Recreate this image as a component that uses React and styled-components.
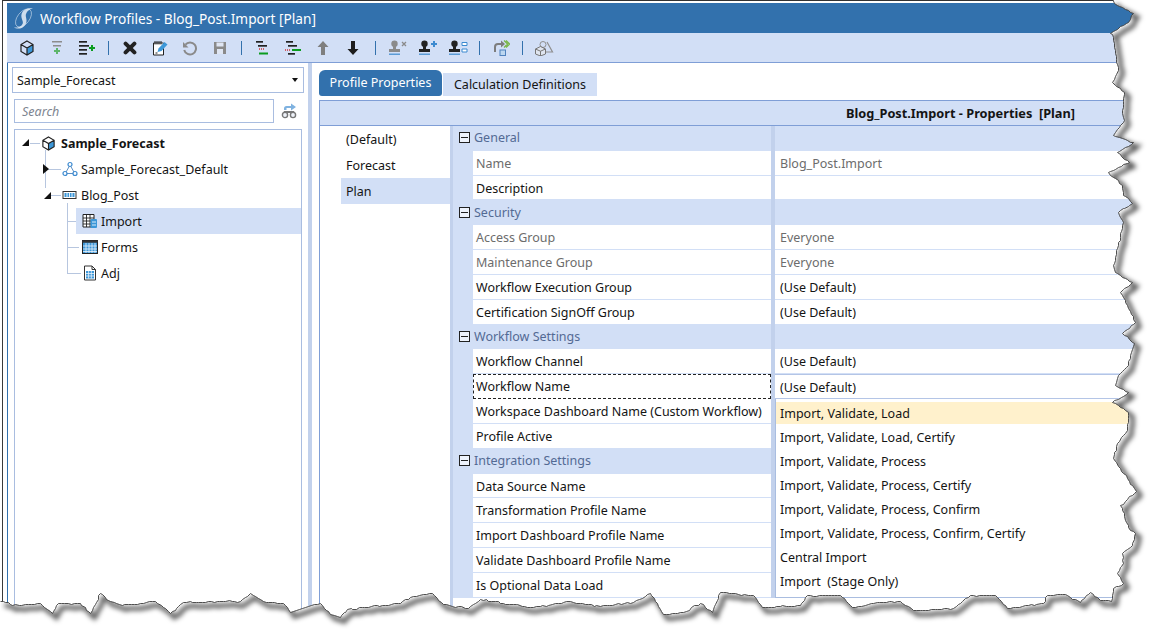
import React from 'react';
import styled, { createGlobalStyle } from 'styled-components';

const FONT = '"Noto Sans", "Open Sans", sans-serif';
const BLUE = '#3271ad';
const PALE = '#d2dff6';
const BAND = '#c2d1ec';
const EDGE = '#a9bde0';

const Global = createGlobalStyle`
  html, body { margin: 0; padding: 0; background: #fff; }
  body { font-family: ${FONT}; font-size: 12.5px; color: #141414; }
`;

const Page = styled.div`
  position: relative;
  width: 1156px;
  height: 638px;
  overflow: hidden;
  background: #fff;
  padding-left: 2px;
  box-sizing: border-box;
`;
const Frame = styled.div`
  height: 638px;
  border-left: 1px solid #3a3a3a;
  border-top: 1px solid #333;
  padding: 2px 0 0 4px;
  box-sizing: border-box;
  display: flex;
  flex-direction: column;
`;
const TitleBar = styled.div`
  height: 30px;
  flex: none;
  background: ${BLUE};
  display: flex;
  align-items: center;
  gap: 6px;
  padding-left: 6px;
  color: #fff;
  font-size: 13.7px;
`;
const Toolbar = styled.div`
  height: 29px;
  flex: none;
  background: ${PALE};
  border-bottom: 1px solid #7f9ed6;
  display: flex;
  align-items: center;
  padding-left: 5px;
`;
const ToolBtn = styled.div`
  width: 30px;
  height: 20px;
  display: flex;
  align-items: center;
  justify-content: center;
  flex: none;
`;
const ToolSep = styled.div`
  width: 1px;
  height: 14px;
  background: #3271ad;
  flex: none;
  margin: 0 ${p => p.$m || 6}px;
`;
const Body = styled.div`
  flex: 1;
  display: flex;
  min-height: 0;
  border-left: 1px solid ${BLUE};
`;
const LeftPanel = styled.div`
  width: 300px;
  flex: none;
  padding: 4px 0 0 4px;
  box-sizing: border-box;
  display: flex;
  flex-direction: column;
`;
const Select = styled.div`
  width: 292px;
  height: 26px;
  border: 1px solid ${EDGE};
  box-sizing: border-box;
  display: flex;
  align-items: center;
  justify-content: space-between;
  padding: 0 4px;
`;
const Caret = styled.span`
  width: 0;
  height: 0;
  border-left: 3px solid transparent;
  border-right: 3px solid transparent;
  border-top: 4px solid #111;
  margin-right: 1px;
`;
const SearchRow = styled.div`
  display: flex;
  align-items: center;
  margin: 6px 0 6px 2px;
  gap: 7px;
`;
const Search = styled.div`
  width: 260px;
  height: 24px;
  border: 1px solid ${EDGE};
  box-sizing: border-box;
  color: #7d8590;
  font-style: italic;
  display: flex;
  align-items: center;
  padding-left: 7px;
`;
const Tree = styled.div`
  margin-left: 2px;
  width: 288px;
  flex: 1;
  border: 1px solid ${EDGE};
  border-bottom: 0;
  box-sizing: border-box;
`;
const TreeRow = styled.div`
  position: relative;
  height: 26px;
  display: flex;
  align-items: center;
  gap: ${p => p.$gap ?? 4}px;
  font-weight: ${p => (p.$bold ? 700 : 400)};
  padding-left: ${p => p.$pad}px;
  margin-left: ${p => (p.$sel ? 61 : 0)}px;
  background: ${p => (p.$sel ? PALE : 'transparent')};
`;
const Arrow = styled.span`
  position: absolute;
  left: ${p => p.$x}px;
  top: ${p => p.$y}px;
  width: 0;
  height: 0;
  ${p => p.$open
    ? `border-bottom: 7px solid #111; border-left: 7px solid transparent;`
    : `border-left: 6px solid #111; border-top: 5px solid transparent; border-bottom: 5px solid transparent;`}
`;
const VLine = styled.span`
  position: absolute;
  left: ${p => p.$x}px;
  top: ${p => p.$top}px;
  height: ${p => p.$h}px;
  width: 1px;
  background: #b7c6df;
`;
const HLine = styled.span`
  position: absolute;
  left: ${p => p.$x}px;
  top: 13px;
  width: ${p => p.$w}px;
  height: 1px;
  background: #b7c6df;
`;
const Splitter = styled.div`
  width: 4px;
  flex: none;
  background: ${BAND};
`;
const RightPanel = styled.div`
  flex: 1;
  min-width: 0;
  padding: 7px 0 0 7px;
  display: flex;
  flex-direction: column;
`;
const Tabs = styled.div`
  height: 26px;
  flex: none;
  display: flex;
  align-items: center;
  gap: 1px;
  margin-bottom: 4px;
`;
const ActiveTab = styled.div`
  width: 123px;
  height: 26px;
  background: ${BLUE};
  color: #fff;
  border-radius: 6px 6px 3px 3px;
  display: flex;
  align-items: center;
  justify-content: center;
  padding-bottom: 2px;
  box-sizing: border-box;
`;
const Tab = styled.div`
  width: 154px;
  height: 23px;
  margin-top: 2px;
  background: ${PALE};
  display: flex;
  align-items: center;
  justify-content: center;
`;
const Box = styled.div`
  flex: 1;
  min-height: 0;
  border-top: 1px solid #7f9ed6;
  border-left: 1px solid #7f9ed6;
  display: flex;
  flex-direction: column;
`;
const BoxHead = styled.div`
  height: 24px;
  flex: none;
  background: ${PALE};
  border-bottom: 1px solid #7f9ed6;
  display: flex;
  align-items: center;
  justify-content: flex-end;
  padding-right: 81px;
  font-weight: 700;
  font-size: 12.75px;
  white-space: pre;
`;
const BoxBody = styled.div`
  flex: 1;
  min-height: 0;
  display: flex;
`;
const ProfileList = styled.div`
  width: 109px;
  flex: none;
  padding-left: 21px;
  border-right: 3px solid ${BAND};
`;
const ProfileItem = styled.div`
  height: 26px;
  display: flex;
  align-items: center;
  padding-left: 5px;
  background: ${p => (p.$sel ? PALE : 'transparent')};
`;
const Grid = styled.div`
  position: relative;
  flex: 1;
  min-width: 0;
  display: grid;
  grid-auto-rows: 24.84px;
  align-content: start;
`;
const Row = styled.div`
  display: grid;
  grid-template-columns: 20px 298px 4px 1fr;
  background: ${PALE};
  min-width: 0;
`;
const GroupCell = styled.div`
  grid-column: 1 / 3;
  display: flex;
  align-items: center;
  color: #536a94;
  padding: 0 0 1px 6px;
  gap: 4px;
`;
const Minus = styled.span`
  width: 9px;
  height: 9px;
  border: 1px solid #222;
  position: relative;
  background: #eef3fc;
  flex: none;
  &::after {
    content: '';
    position: absolute;
    left: 1px;
    right: 1px;
    top: 4px;
    height: 1px;
    background: #222;
  }
`;
const Gutter = styled.div``;
const NameCell = styled.div`
  background: #fff;
  border-bottom: 1px solid ${PALE};
  box-sizing: border-box;
  display: flex;
  align-items: center;
  padding: 1px 0 0 3px;
  color: ${p => (p.$dim ? '#6c6c6c' : '#141414')};
  white-space: nowrap;
  ${p => p.$focus && `outline: 1px dashed #222; outline-offset: -1px; border-bottom-color: transparent;`}
`;
const Divider = styled.div`
  background: ${BAND};
`;
const ValueCell = styled.div`
  background: ${p => (p.$group ? PALE : '#fff')};
  ${p => !p.$group && `border-bottom: 1px solid ${p.$edit ? '#b4c5e6' : PALE};`}
  ${p => p.$edit && `border-top: 1px solid #b4c5e6;`}
  box-sizing: border-box;
  display: flex;
  align-items: center;
  padding: 1px 0 0 5px;
  color: ${p => (p.$dim ? '#6c6c6c' : '#141414')};
`;
const Menu = styled.div`
  position: absolute;
  left: 322px;
  right: 0;
  top: 273px;
  height: 199px;
  background: #fff;
  border-left: 1px solid ${EDGE};
  border-bottom: 1px solid ${EDGE};
  box-sizing: border-box;
  padding-top: 3px;
`;
const MenuItem = styled.div`
  box-sizing: border-box;
  display: flex;
  align-items: center;
  padding-left: 4px;
  white-space: pre;
  background: ${p => (p.$hot ? '#fff1cc' : 'transparent')};
  height: ${p => (p.$hot ? 22 : 24)}px;
  margin-bottom: ${p => (p.$hot ? 1 : 0)}px;
`;
const TornLayer = styled.svg`
  position: absolute;
  left: 0;
  top: 0;
  pointer-events: none;
`;

/* ---------- icons ---------- */
const Cube = ({ s = 16 }) => (
  <svg width={s} height={s} viewBox="0 0 16 16">
    <path d="M8 8 14 5V11.5L8 15Z" fill="#3c97d8" />
    <path d="M8 1 14 4.5V11.5L8 15 2 11.5V4.5ZM2 4.5 8 8 14 4.5M8 8V15" fill="none" stroke="#222" strokeWidth="1.2" />
  </svg>
);
const AddAbove = () => (
  <svg width="16" height="16" viewBox="0 0 16 16">
    <rect x="3" y="1" width="10" height="1.5" fill="#8c8c8c" />
    <rect x="4" y="5" width="8" height="1.5" fill="#8c8c8c" />
    <path d="M8 8v6M5 11h6" stroke="#5db56a" strokeWidth="2" />
  </svg>
);
const AddList = () => (
  <svg width="18" height="16" viewBox="0 0 18 16">
    <rect x="1" y="1" width="8" height="1.7" fill="#222" />
    <rect x="1" y="5" width="10" height="1.7" fill="#222" />
    <rect x="1" y="9" width="8" height="1.7" fill="#222" />
    <rect x="1" y="13" width="8" height="1.7" fill="#222" />
    <path d="M14 5v6M11 8h6" stroke="#0a9c1f" strokeWidth="2" />
  </svg>
);
const Cross = () => (
  <svg width="14" height="14" viewBox="0 0 14 14">
    <path d="M2.6 2.6 11.4 11.4M11.4 2.6 2.6 11.4" stroke="#222" strokeWidth="4" strokeLinecap="round" />
  </svg>
);
const Note = () => (
  <svg width="16" height="16" viewBox="0 0 16 16">
    <path d="M1.5 3h10v12h-10Z" fill="#fff" stroke="#222" />
    <path d="M3 1v3.5M5 1v3.5M7 1v3.5M9 1v3.5" stroke="#222" />
    <path d="M5.5 12l1-3.5L12.5 2l3 2.5-6 6.5Z" fill="#3c97d8" />
    <path d="M3.5 13h2" stroke="#222" />
  </svg>
);
const Undo = () => (
  <svg width="16" height="16" viewBox="0 0 16 16">
    <path d="M3.4 4.6A6 6 0 1 1 2.2 10" fill="none" stroke="#8a8a8a" strokeWidth="2" />
    <path d="M1 2v5.5h5.5Z" fill="#8a8a8a" />
  </svg>
);
const Save = () => (
  <svg width="14" height="14" viewBox="0 0 14 14">
    <path d="M1 1H13V13H1Z" fill="#8a8a8a" />
    <rect x="3.5" y="1.5" width="7" height="4" fill="#dfe6f3" />
    <rect x="4" y="8" width="6" height="5" fill="#dfe6f3" />
  </svg>
);
const Outdent = ({ mode }) => (
  <svg width="18" height="16" viewBox="0 0 18 16">
    <rect x="2" y="1" width="7" height="1.7" fill="#222" />
    <rect x="4" y="5" width="9" height="1.7" fill="#222" />
    {mode === 'a' ? (
      <>
        <path d="M5 9h6" stroke="#d03030" strokeWidth="1.4" strokeDasharray="1 1" />
        <rect x="5" y="12.5" width="9" height="2" fill="#0a9c1f" />
      </>
    ) : (
      <>
        <path d="M1 10h6" stroke="#d03030" strokeWidth="1.4" strokeDasharray="1 1" />
        <rect x="8" y="9" width="9" height="2" fill="#0a9c1f" />
        <rect x="4" y="13" width="7" height="1.7" fill="#222" />
      </>
    )}
  </svg>
);
const ArrowUp = ({ c = '#7f7f7f' }) => (
  <svg width="14" height="16" viewBox="0 0 14 16">
    <path d="M7 1 12.5 7H9V15H5V7H1.5Z" fill={c} />
  </svg>
);
const ArrowDown = () => (
  <svg width="14" height="16" viewBox="0 0 14 16">
    <path d="M7 15 12.5 9H9V1H5V9H1.5Z" fill="#1d1d1d" />
  </svg>
);
const Stamp = ({ c, children }) => (
  <svg width="20" height="16" viewBox="0 0 20 16">
    <circle cx="6.5" cy="3.8" r="3.2" fill={c} />
    <path d="M5 5.5h3V9h4v3H1V9h4Z" fill={c} />
    <rect x="1" y="13.5" width="11" height="1.5" fill="#5b9bd5" />
    {children}
  </svg>
);
const Share = () => (
  <svg width="18" height="18" viewBox="0 0 18 18">
    <path d="M3 13V8a3 3 0 0 1 3-3h4" fill="none" stroke="#7d7d7d" strokeWidth="2" />
    <path d="M9 1.5 13 5 9 8.5Z" fill="#7d7d7d" />
    <path d="M12 1.5l3.5 3.5-3.5 3.5M14 1.5l3.5 3.5-3.5 3.5" fill="none" stroke="#7ab648" strokeWidth="1.3" />
    <rect x="8" y="11" width="5.5" height="5.5" fill="#bcd6ef" stroke="#4f81bd" />
  </svg>
);
const Shapes = () => (
  <svg width="20" height="16" viewBox="0 0 20 16">
    <path d="M13 2 18.5 12H11" fill="none" stroke="#8f8f8f" strokeWidth="1.2" />
    <circle cx="9" cy="4.5" r="3" fill="none" stroke="#8f8f8f" />
    <path d="M6.5 6.5 11.5 9v5l-5 2-5-2V9Z" fill="#dfe5f0" stroke="#777" />
    <path d="M1.5 9l5 2.2 5-2.2M6.5 11.2V16" fill="none" stroke="#777" />
  </svg>
);
const Bike = () => (
  <svg width="16" height="16" viewBox="0 0 16 16">
    <path d="M3 7V5.5A2.5 2.5 0 0 1 5.5 3H10V0.5L15 4 10 7.5V5H5.5v2Z" fill="#7fb2e0" />
    <circle cx="4" cy="12" r="2.6" fill="#eef2f9" stroke="#777" strokeWidth="1.4" />
    <circle cx="12" cy="12" r="2.6" fill="#eef2f9" stroke="#777" strokeWidth="1.4" />
    <path d="M3 8h10l1 2H2Z" fill="#777" />
  </svg>
);
const Logo = () => (
  <svg width="21" height="22" viewBox="0 0 21 22">
    <ellipse cx="10.5" cy="11" rx="6" ry="10.5" fill="none" stroke="#c4d6e9" strokeWidth=".9" opacity=".7" transform="rotate(38 10.5 11)" />
    <path d="M20 1.5C14 .5 9.5 3 8.5 7.5S11 14 9.5 17 4 21 1 20.5c3 2 9 1.5 11.5-3s-.5-7 .5-10.5S17 2 20 1.5Z" fill="#dfe9f4" opacity=".9" />
  </svg>
);
const Network = () => (
  <svg width="16" height="16" viewBox="0 0 16 16">
    <path d="M8 4 3.5 12M8 4l4.5 8M3.5 12.5h9" stroke="#5c8fc4" fill="none" />
    <circle cx="8" cy="3.5" r="2" fill="#fff" stroke="#3c8ad0" strokeWidth="1.2" />
    <circle cx="3" cy="12.5" r="2" fill="#fff" stroke="#3c8ad0" strokeWidth="1.2" />
    <circle cx="13" cy="12.5" r="2" fill="#fff" stroke="#3c8ad0" strokeWidth="1.2" />
  </svg>
);
const Rack = () => (
  <svg width="15" height="16" viewBox="0 0 15 16">
    <rect x="1" y="4.5" width="13" height="7" fill="#fff" stroke="#333" />
    <rect x="2.5" y="6" width="10" height="4" fill="#3c97d8" />
    <path d="M5 6v4M7.5 6v4M10 6v4" stroke="#eaf3fb" />
  </svg>
);
const ImportIco = () => (
  <svg width="16" height="16" viewBox="0 0 16 16">
    <path d="M1 1.5H12V14H1Z" fill="#fff" stroke="#222" />
    <path d="M1 5h11M1 8h11M1 11h11M4.5 1.5V14M8 1.5V14" stroke="#222" strokeWidth=".9" />
    <rect x="8.5" y="6" width="6.5" height="9" rx="1" fill="#3c97d8" />
    <path d="M10 9h4M10 12h4" stroke="#d8ebf9" />
  </svg>
);
const FormsIco = () => (
  <svg width="16" height="16" viewBox="0 0 16 16">
    <rect x=".5" y="1.5" width="15" height="13" fill="#3c97d8" stroke="#222" />
    <rect x=".5" y="1.5" width="15" height="2.2" fill="#333" />
    <path d="M4 4v10M7 4v10M10 4v10M13 4v10M1 7h14M1 10h14M1 12.5h14" stroke="#eaf3fb" strokeWidth=".8" />
  </svg>
);
const AdjIco = () => (
  <svg width="14" height="16" viewBox="0 0 14 16">
    <path d="M1.5 1H9l3.5 3.5V15h-11Z" fill="#fff" stroke="#333" />
    <path d="M9 1v3.5h3.5" fill="none" stroke="#333" />
    <rect x="3" y="6" width="8" height="7.5" fill="#3c97d8" />
    <path d="M5.6 6v7.5M8.3 6v7.5M3 8.5h8M3 11h8" stroke="#eaf3fb" strokeWidth=".8" />
  </svg>
);

/* ---------- torn paper edge ---------- */
const EDGE_POINTS = [
  [1113,0],[1114,3],[1133,13],[1128,22],[1110,33],[1113,37],[1115,50],[1118,70],[1112,82],[1124,92],[1122,110],[1124,120],
  [1113,135],[1133,142],[1117,152],[1129,162],[1108,172],[1122,185],[1123,195],[1132,203],[1118,212],[1123,222],[1118,245],
  [1113,265],[1115,272],[1132,282],[1120,292],[1127,305],[1135,322],[1122,333],[1134,343],[1130,355],[1128,365],[1118,375],
  [1115,385],[1128,392],[1112,402],[1128,412],[1127,430],[1117,443],[1113,458],[1127,478],[1136,491],[1120,505],[1130,530],
  [1135,533],[1132,545],[1122,553],[1123,563],[1117,573],[1123,583],[1113,588],[1111,601],[1100,600],[1090,592],[1080,602],
  [1065,594],[1047,595],[1043,603],[1007,608],[995,595],[970,595],[953,608],[913,610],[900,601],[877,602],[852,607],[840,595],
  [807,595],[800,605],[762,607],[753,595],[720,592],[712,612],[700,603],[683,612],[663,614],[650,593],[633,602],[600,606],
  [570,601],[533,607],[503,603],[480,599],[468,608],[443,604],[432,593],[410,597],[400,603],[347,609],[340,617],[330,614],
  [320,603],[290,612],[283,603],[263,601],[250,593],[240,601],[217,601],[183,602],[170,613],[155,601],[122,605],[108,600],
  [100,593],[90,613],[80,603],[58,603],[52,613],[40,603],[12,605],[8,602],[0,601]
];

const buildEdge = () => {
  let seed = 17;
  const rnd = () => { seed = (seed * 137 + 71) % 1009; return seed / 1009 - 0.5; };
  let d = '';
  EDGE_POINTS.forEach(([x, y], i) => {
    if (i === 0) { d = `M${x} ${y}`; return; }
    const [px, py] = EDGE_POINTS[i - 1];
    const n = Math.max(1, Math.round(Math.hypot(x - px, y - py) / 3));
    for (let k = 1; k <= n; k++) {
      const t = k / n;
      const j = k === n ? 0 : 1.3;
      d += `L${Math.round(px + (x - px) * t + rnd() * j) + 0.5} ${Math.round(py + (y - py) * t + rnd() * j) + 0.5}`;
    }
  });
  return d;
};

const TornEdge = () => {
  const line = buildEdge();
  const outside = `${line}L0 638L1156 638L1156 0Z`;
  return (
    <TornLayer width="1156" height="638" viewBox="0 0 1156 638">
      <defs>
        <filter id="blur" x="-5%" y="-5%" width="110%" height="110%">
          <feGaussianBlur stdDeviation="2.4" />
        </filter>
        <clipPath id="out"><path d={outside} /></clipPath>
      </defs>
      <path d={outside} fill="#fff" />
      <g clipPath="url(#out)">
        <path d={line} fill="none" stroke="#000" strokeOpacity=".7" strokeWidth="4" filter="url(#blur)" transform="translate(4 4)" />
      </g>
      <path d={line} fill="none" stroke="#3c3c3c" strokeWidth=".9" />
    </TornLayer>
  );
};

/* ---------- data ---------- */
const ROWS = [
  { g: 'General' },
  { n: 'Name', v: 'Blog_Post.Import', nd: 1, vd: 1 },
  { n: 'Description', v: '' },
  { g: 'Security' },
  { n: 'Access Group', v: 'Everyone', nd: 1, vd: 1 },
  { n: 'Maintenance Group', v: 'Everyone', nd: 1, vd: 1 },
  { n: 'Workflow Execution Group', v: '(Use Default)' },
  { n: 'Certification SignOff Group', v: '(Use Default)' },
  { g: 'Workflow Settings' },
  { n: 'Workflow Channel', v: '(Use Default)' },
  { n: 'Workflow Name', v: '(Use Default)', focus: 1 },
  { n: 'Workspace Dashboard Name (Custom Workflow)', v: '' },
  { n: 'Profile Active', v: '' },
  { g: 'Integration Settings' },
  { n: 'Data Source Name', v: '' },
  { n: 'Transformation Profile Name', v: '' },
  { n: 'Import Dashboard Profile Name', v: '' },
  { n: 'Validate Dashboard Profile Name', v: '' },
  { n: 'Is Optional Data Load', v: '' },
];
const OPTIONS = [
  'Import, Validate, Load',
  'Import, Validate, Load, Certify',
  'Import, Validate, Process',
  'Import, Validate, Process, Certify',
  'Import, Validate, Process, Confirm',
  'Import, Validate, Process, Confirm, Certify',
  'Central Import',
  'Import  (Stage Only)',
];

export default function App() {
  return (
    <>
      <Global />
      <Page>
        <Frame>
          <TitleBar><Logo />Workflow Profiles - Blog_Post.Import [Plan]</TitleBar>
          <Toolbar>
            <ToolBtn><Cube /></ToolBtn>
            <ToolBtn><AddAbove /></ToolBtn>
            <ToolBtn><AddList /></ToolBtn>
            <ToolSep />
            <ToolBtn><Cross /></ToolBtn>
            <ToolBtn><Note /></ToolBtn>
            <ToolBtn><Undo /></ToolBtn>
            <ToolBtn><Save /></ToolBtn>
            <ToolSep />
            <ToolBtn><Outdent mode="a" /></ToolBtn>
            <ToolBtn><Outdent mode="b" /></ToolBtn>
            <ToolBtn><ArrowUp /></ToolBtn>
            <ToolBtn><ArrowDown /></ToolBtn>
            <ToolSep $m={7} />
            <ToolBtn>
              <Stamp c="#8a8a8a"><path d="M14 2l4 4M18 2l-4 4" stroke="#8a8a8a" strokeWidth="1.3" /></Stamp>
            </ToolBtn>
            <ToolBtn>
              <Stamp c="#222"><path d="M16 1v6M13 4h6" stroke="#3c8ad0" strokeWidth="2" /></Stamp>
            </ToolBtn>
            <ToolBtn>
              <Stamp c="#222"><path d="M14 2.5h5v3h-5ZM14 9h5v3h-5Z" fill="#fff" stroke="#3c8ad0" /></Stamp>
            </ToolBtn>
            <ToolSep />
            <ToolBtn><Share /></ToolBtn>
            <ToolSep />
            <ToolBtn><Shapes /></ToolBtn>
          </Toolbar>
          <Body>
            <LeftPanel>
              <Select>Sample_Forecast<Caret /></Select>
              <SearchRow>
                <Search>Search</Search>
                <Bike />
              </SearchRow>
              <Tree>
                <TreeRow $bold $pad={26} $gap={5}>
                  <Arrow $open $x={7} $y={9} /><HLine $x={15} $w={10} />
                  <Cube s={15} />Sample_Forecast
                </TreeRow>
                <TreeRow $pad={47} $gap={3}>
                  <VLine $x={30} $top={-6} $h={32} />
                  <HLine $x={32} $w={14} />
                  <Arrow $x={28} $y={8} />
                  <Network />Sample_Forecast_Default
                </TreeRow>
                <TreeRow $pad={47} $gap={4}>
                  <VLine $x={30} $top={0} $h={6} />
                  <HLine $x={36} $w={10} />
                  <Arrow $open $x={29} $y={10} />
                  <Rack />Blog_Post
                </TreeRow>
                <TreeRow $sel $pad={6} $gap={3}>
                  <VLine $x={-9} $top={-5} $h={31} />
                  <HLine $x={-9} $w={9} />
                  <ImportIco />Import
                </TreeRow>
                <TreeRow $pad={67} $gap={3}>
                  <VLine $x={52} $top={0} $h={26} />
                  <HLine $x={52} $w={12} />
                  <FormsIco />Forms
                </TreeRow>
                <TreeRow $pad={68} $gap={4}>
                  <VLine $x={52} $top={0} $h={14} />
                  <HLine $x={52} $w={14} />
                  <AdjIco />Adj
                </TreeRow>
              </Tree>
            </LeftPanel>
            <Splitter />
            <RightPanel>
              <Tabs>
                <ActiveTab>Profile Properties</ActiveTab>
                <Tab>Calculation Definitions</Tab>
              </Tabs>
              <Box>
                <BoxHead>{'Blog_Post.Import - Properties  [Plan]'}</BoxHead>
                <BoxBody>
                  <ProfileList>
                    <ProfileItem>(Default)</ProfileItem>
                    <ProfileItem>Forecast</ProfileItem>
                    <ProfileItem $sel>Plan</ProfileItem>
                  </ProfileList>
                  <Grid>
                    {ROWS.map((r, i) =>
                      r.g ? (
                        <Row key={i}>
                          <GroupCell><Minus />{r.g}</GroupCell>
                          <Divider />
                          <ValueCell $group />
                        </Row>
                      ) : (
                        <Row key={i}>
                          <Gutter />
                          <NameCell $dim={r.nd} $focus={r.focus}>{r.n}</NameCell>
                          <Divider />
                          <ValueCell $dim={r.vd} $edit={r.focus}>{r.v}</ValueCell>
                        </Row>
                      )
                    )}
                    <Menu>
                      {OPTIONS.map((o, i) => <MenuItem key={o} $hot={i === 0}>{o}</MenuItem>)}
                    </Menu>
                  </Grid>
                </BoxBody>
              </Box>
            </RightPanel>
          </Body>
        </Frame>
        <TornEdge />
      </Page>
    </>
  );
}
